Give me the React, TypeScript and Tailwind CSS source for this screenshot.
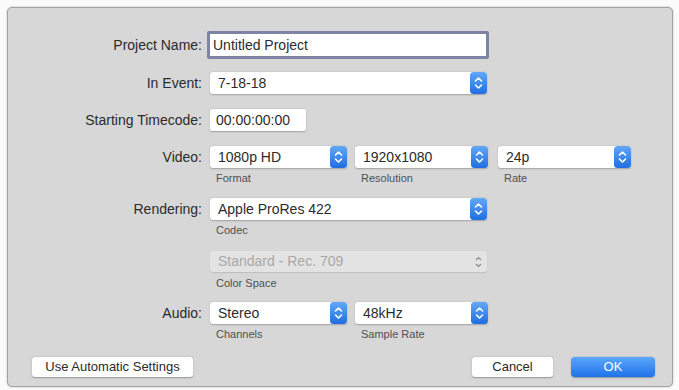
import React from "react";

const Stepper = ({ disabled = false }: { disabled?: boolean }) => {
  if (disabled) {
    return (
      <svg width="17" height="22" viewBox="0 0 17 22" className="shrink-0">
        <path d="M6 9 L8.5 6.5 L11 9" fill="none" stroke="#8c8c8c" strokeWidth="1.2" />
        <path d="M6 13 L8.5 15.5 L11 13" fill="none" stroke="#8c8c8c" strokeWidth="1.2" />
      </svg>
    );
  }
  return (
    <svg width="17" height="22" viewBox="0 0 17 22" className="shrink-0">
      <defs>
        <linearGradient id="stp" x1="0" y1="0" x2="0" y2="1">
          <stop offset="0" stopColor="#62a8f8" />
          <stop offset="1" stopColor="#1f6ee0" />
        </linearGradient>
      </defs>
      <rect x="0" y="0" width="17" height="22" rx="3.5" fill="url(#stp)" />
      <path d="M5.5 9 L8.5 6 L11.5 9" fill="none" stroke="#fff" strokeWidth="1.6" strokeLinecap="round" strokeLinejoin="round" />
      <path d="M5.5 13 L8.5 16 L11.5 13" fill="none" stroke="#fff" strokeWidth="1.6" strokeLinecap="round" strokeLinejoin="round" />
    </svg>
  );
};

const Select = ({ value, width, sub }: { value: string; width: string; sub?: string }) => (
  <div className="flex flex-col">
    <div className={`flex h-[22px] items-center justify-between rounded-[3px] bg-white shadow-[0_0.5px_1.5px_rgba(0,0,0,0.25)] ${width}`}>
      <span className="pl-2 text-[14px] text-[#2b2b2b]">{value}</span>
      <Stepper />
    </div>
    {sub && <span className="mt-[3px] h-[14px] pl-[6px] text-[11px] leading-[14px] text-[#505050]">{sub}</span>}
  </div>
);

const Label = ({ text }: { text: string }) => (
  <div className="flex h-[22px] w-[194px] shrink-0 items-center justify-end text-[14px] text-[#2b2b2b]">{text}</div>
);

export default function App() {
  return (
    <div className="h-[390px] w-[679px] bg-[#fbfbfb] pl-[7px] pt-[7px] font-['Liberation_Sans',Arial,sans-serif]">
      <div className="flex h-[380px] w-[666px] flex-col rounded-[5px] border border-[#a3a3a3] bg-[#d7d7d7] shadow-[0_0_2px_rgba(0,0,0,0.3)]">
        {/* project name */}
        <div className="mt-[23px] flex items-center">
          <Label text="Project Name:" />
          <div className="ml-[5px] flex h-[28px] w-[282px] items-center rounded-[2px] border-[3px] border-[#7d84a6] bg-white">
            <span className="pl-[3px] text-[14px] text-[#2b2b2b]">Untitled Project</span>
          </div>
        </div>

        {/* in event */}
        <div className="mt-[13px] flex">
          <Label text="In Event:" />
          <div className="ml-[8px]">
            <Select value="7-18-18" width="w-[277px]" />
          </div>
        </div>

        {/* timecode */}
        <div className="mt-[15px] flex">
          <Label text="Starting Timecode:" />
          <div className="ml-[8px] flex h-[22px] w-[96px] items-center rounded-[2px] bg-white shadow-[0_0.5px_1.5px_rgba(0,0,0,0.25)]">
            <span className="pl-[6px] text-[14px] text-[#2b2b2b]">00:00:00:00</span>
          </div>
        </div>

        {/* video */}
        <div className="mt-[15px] flex">
          <Label text="Video:" />
          <div className="ml-[8px] flex">
            <Select value="1080p HD" width="w-[137px]" sub="Format" />
            <div className="ml-[8px]">
              <Select value="1920x1080" width="w-[133px]" sub="Resolution" />
            </div>
            <div className="ml-[10px]">
              <Select value="24p" width="w-[133px]" sub="Rate" />
            </div>
          </div>
        </div>

        {/* rendering */}
        <div className="mt-[13px] flex">
          <Label text="Rendering:" />
          <div className="ml-[8px]">
            <Select value="Apple ProRes 422" width="w-[277px]" sub="Codec" />
          </div>
        </div>

        {/* color space */}
        <div className="mt-[14px] flex">
          <div className="w-[194px] shrink-0" />
          <div className="ml-[8px] flex flex-col">
            <div className="flex h-[21px] w-[277px] items-center justify-between rounded-[3px] bg-[#e3e3e3] shadow-[0_0.5px_1px_rgba(0,0,0,0.12)]">
              <span className="pl-2 text-[14px] text-[#a8a8a8]">Standard - Rec. 709</span>
              <Stepper disabled />
            </div>
            <span className="mt-[4px] h-[14px] pl-[6px] text-[11px] leading-[14px] text-[#505050]">Color Space</span>
          </div>
        </div>

        {/* audio */}
        <div className="mt-[12px] flex">
          <Label text="Audio:" />
          <div className="ml-[8px] flex">
            <Select value="Stereo" width="w-[137px]" sub="Channels" />
            <div className="ml-[8px]">
              <Select value="48kHz" width="w-[133px]" sub="Sample Rate" />
            </div>
          </div>
        </div>

        {/* buttons */}
        <div className="mt-[16px] flex items-center pl-[24px] pr-[17px]">
          <button className="h-[20px] w-[161px] rounded-[3px] bg-white text-[13px] text-[#2b2b2b] shadow-[0_0.5px_1.5px_rgba(0,0,0,0.3)]">
            Use Automatic Settings
          </button>
          <div className="flex-1" />
          <button className="h-[20px] w-[81px] rounded-[3px] bg-white text-[13px] text-[#2b2b2b] shadow-[0_0.5px_1.5px_rgba(0,0,0,0.3)]">
            Cancel
          </button>
          <button className="ml-[18px] h-[20px] w-[84px] rounded-[4px] bg-gradient-to-b from-[#5ba7fb] to-[#1f72ea] text-[13px] text-white shadow-[0_0.5px_1.5px_rgba(0,0,0,0.3)]">
            OK
          </button>
        </div>
      </div>
    </div>
  );
}
